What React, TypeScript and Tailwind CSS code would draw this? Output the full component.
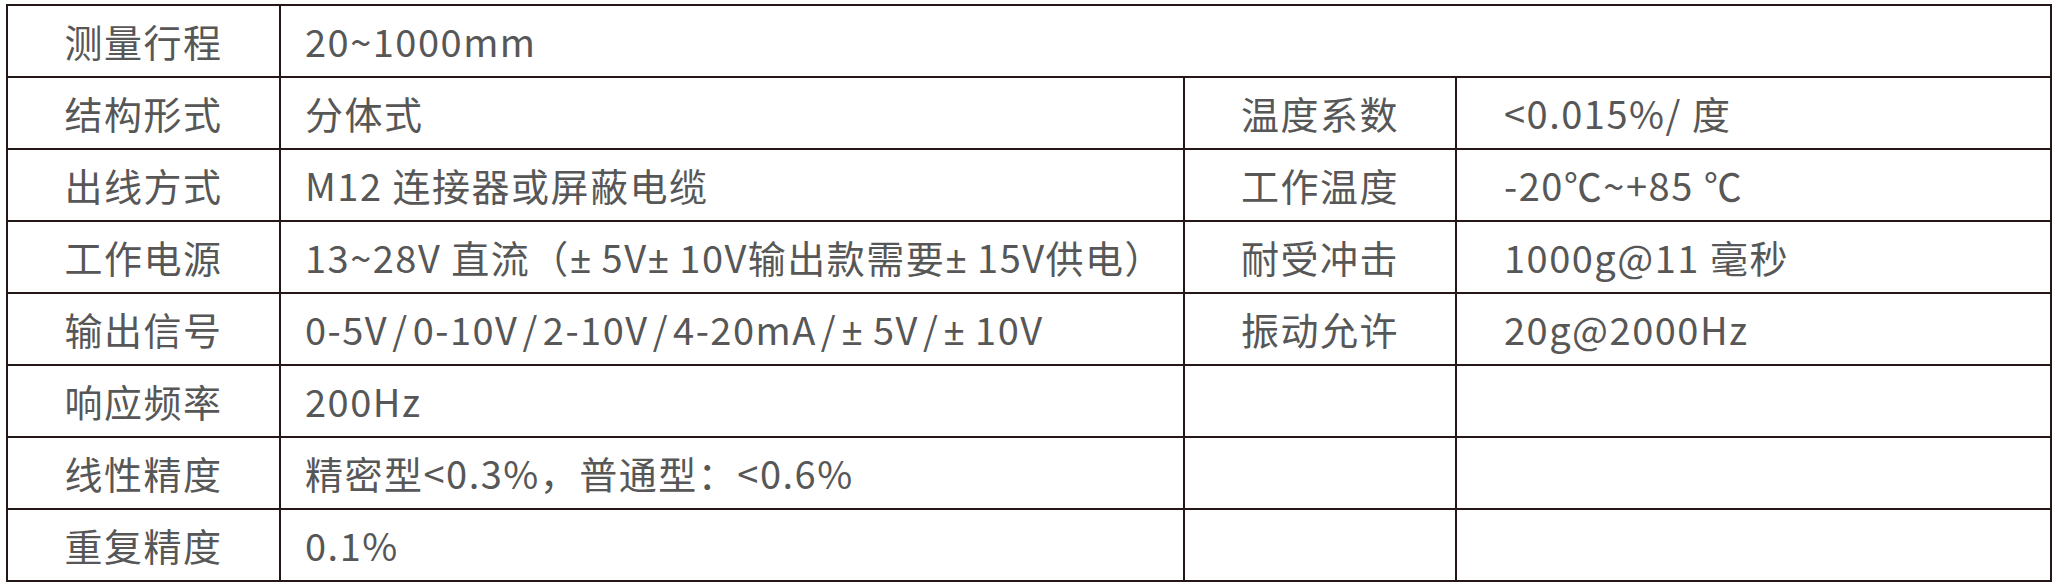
import React from "react";

type Row = {
  label: string;
  value: string;
  label2?: string;
  value2?: string;
  wide?: boolean;
  spacedSlash?: boolean;
};

const rows: Row[] = [
  { label: "测量行程", value: "20~1000mm", wide: true },
  { label: "结构形式", value: "分体式", label2: "温度系数", value2: "<0.015%/ 度" },
  { label: "出线方式", value: "M12 连接器或屏蔽电缆", label2: "工作温度", value2: "-20℃~+85 ℃" },
  {
    label: "工作电源",
    value: "13~28V 直流（± 5V± 10V输出款需要± 15V供电）",
    label2: "耐受冲击",
    value2: "1000g@11 毫秒",
  },
  {
    label: "输出信号",
    value: "0-5V/0-10V/2-10V/4-20mA/± 5V/± 10V",
    label2: "振动允许",
    value2: "20g@2000Hz",
    spacedSlash: true,
  },
  { label: "响应频率", value: "200Hz" },
  { label: "线性精度", value: "精密型<0.3%，普通型：<0.6%" },
  { label: "重复精度", value: "0.1%" },
];

const cell = "border-2 border-[#231815] h-[72px] p-0 align-middle";

// the CJK font draws ± full width; the reference has a narrow one
function PlusMinus({ value }: { value: string }) {
  const parts = value.split("±");
  return (
    <>
      {parts.map((part, i) => (
        <React.Fragment key={i}>
          {i > 0 && <span className="font-['Noto_Sans',sans-serif] tracking-normal">±</span>}
          {part}
        </React.Fragment>
      ))}
    </>
  );
}

function Text({ value, spacedSlash }: { value: string; spacedSlash?: boolean }) {
  if (!spacedSlash) return <PlusMinus value={value} />;
  const parts = value.split("/");
  return (
    <>
      {parts.map((part, i) => (
        <React.Fragment key={i}>
          {i > 0 && <span className="px-[4px]">/</span>}
          <PlusMinus value={part} />
        </React.Fragment>
      ))}
    </>
  );
}

export default function App() {
  return (
    <div className="w-[2055px] h-[588px] bg-white pt-[4px] pl-[6px] font-['Noto_Sans_CJK_SC','Noto_Sans',sans-serif] text-[38px] leading-none tracking-[1.5px] text-[#575757]">
      <table className="border-collapse table-fixed w-[2044px]">
        <colgroup>
          <col className="w-[273px]" />
          <col className="w-[904px]" />
          <col className="w-[272px]" />
          <col className="w-[595px]" />
        </colgroup>
        <tbody>
          {rows.map((row) => (
            <tr key={row.label}>
              <td className={`${cell} text-center`}>{row.label}</td>
              {row.wide ? (
                <td className={`${cell} pl-[24px]`} colSpan={3}>
                  <Text value={row.value} />
                </td>
              ) : (
                <>
                  <td className={`${cell} pl-[24px] whitespace-nowrap`}>
                    <Text value={row.value} spacedSlash={row.spacedSlash} />
                  </td>
                  <td className={`${cell} text-center`}>{row.label2}</td>
                  <td className={`${cell} pl-[47px]`}>{row.value2}</td>
                </>
              )}
            </tr>
          ))}
        </tbody>
      </table>
    </div>
  );
}
